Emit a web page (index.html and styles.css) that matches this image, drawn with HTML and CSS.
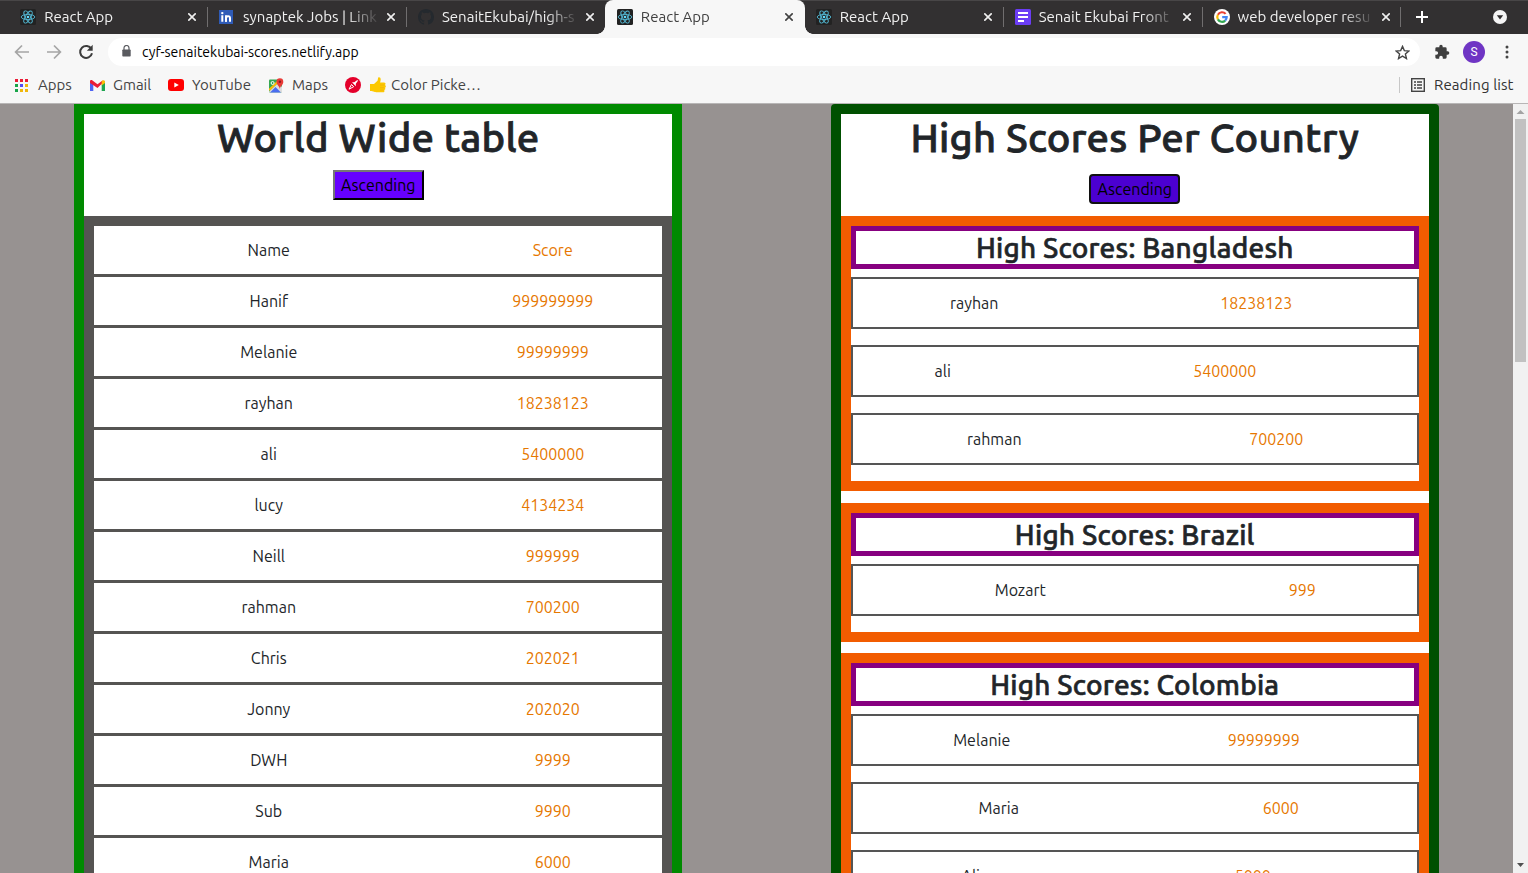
FILE: index.html
```html
<!DOCTYPE html>
<html lang="en">
<head>
<meta charset="utf-8">
<title>React App</title>
<link rel="stylesheet" href="styles.css">
</head>
<body>
<svg class="defs" width="0" height="0">
  <symbol id="react" viewBox="0 0 16 16"><rect width="16" height="16" rx="1.5" fill="#222"/><g fill="none" stroke="#53b8d4" stroke-width=".9"><ellipse cx="8" cy="8" rx="6.8" ry="2.6"/><ellipse cx="8" cy="8" rx="6.8" ry="2.6" transform="rotate(60 8 8)"/><ellipse cx="8" cy="8" rx="6.8" ry="2.6" transform="rotate(120 8 8)"/></g><circle cx="8" cy="8" r="1.3" fill="#61dafb"/></symbol>
  <symbol id="close" viewBox="0 0 8 8"><path d="M.3.3l7.4 7.4M7.700.3L.3 7.700" stroke="currentColor" stroke-width="1.6"/></symbol>
</svg>
<header class="browser">
  <div class="tabs">
    <div class="tab"><svg class="fav"><use href="#react"/></svg><span class="title">React App</span><svg class="close"><use href="#close"/></svg></div>
    <div class="tab"><svg class="fav" viewBox="0 0 16 16"><rect y="1" width="14" height="14" fill="#2f5bb7"/><path d="M2.3 6.2h2v6.5h-2zM6 6.2h1.9v6.5H6z" fill="#fff"/><circle cx="3.3" cy="4.1" r="1.2" fill="#fff"/><path d="M7 12.7V9c0-2.3 4-2.600 4 0v3.700" fill="none" stroke="#fff" stroke-width="2"/></svg><span class="title">synaptek Jobs | Link</span><svg class="close"><use href="#close"/></svg></div>
    <div class="tab no-line"><svg class="fav" viewBox="0 0 16 16"><path fill="#24292e" d="M8 0C3.580 0 0 3.580 0 8c0 3.540 2.290 6.530 5.470 7.590.4.070.55-.17.55-.38v-1.490c-2.010.37-2.530-.49-2.690-.94-.09-.23-.48-.94-.82-1.130-.28-.15-.68-.52-.01-.53.63-.01 1.080.58 1.230.82.72 1.210 1.870.87 2.330.66.070-.52.28-.87.51-1.070-1.780-.2-3.640-.89-3.640-3.950 0-.87.31-1.590.82-2.150-.08-.2-.36-1.020.08-2.120 0 0 .67-.21 2.200.82a7.600 7.600 0 0 1 4 0c1.530-1.040 2.200-.82 2.200-.82.44 1.100.16 1.920.08 2.120.51.56.82 1.270.82 2.150 0 3.070-1.870 3.750-3.650 3.950.29.25.54.73.54 1.480v2.200c0 .21.150.46.55.38A8 8 0 0 0 16 8c0-4.420-3.580-8-8-8z"/></svg><span class="title">SenaitEkubai/high-s</span><svg class="close"><use href="#close"/></svg></div>
    <div class="tab active"><svg class="fav"><use href="#react"/></svg><span class="title">React App</span><svg class="close"><use href="#close"/></svg></div>
    <div class="tab"><svg class="fav"><use href="#react"/></svg><span class="title">React App</span><svg class="close"><use href="#close"/></svg></div>
    <div class="tab"><svg class="fav" viewBox="0 0 16 16"><rect width="16" height="16" rx="1.500" fill="#6b3df5"/><path d="M3 4h10M3 8h10M3 12h6" stroke="#fff" stroke-width="1.900"/></svg><span class="title">Senait Ekubai Front</span><svg class="close"><use href="#close"/></svg></div>
    <div class="tab"><svg class="fav" viewBox="0 0 16 16"><circle cx="8" cy="8" r="8" fill="#fff"/><g fill="none" stroke-width="2.200"><path d="M11.600 4.900A4.700 4.700 0 0 0 3.900 5.700" stroke="#ea4335"/><path d="M3.900 5.700a4.700 4.700 0 0 0 0 4.700" stroke="#fbbc05"/><path d="M3.900 10.400a4.700 4.700 0 0 0 7.300 1.200" stroke="#34a853"/><path d="M11.200 11.600c1-.9 1.500-2 1.500-3.500H8.200" stroke="#4285f4"/></g></svg><span class="title">web developer resu</span><svg class="close"><use href="#close"/></svg></div>
    <svg class="plus" viewBox="0 0 12 12"><path d="M6 0v12M0 6h12" stroke="#fff" stroke-width="2"/></svg>
    <svg class="tabmenu" viewBox="0 0 14 14"><circle cx="7" cy="7" r="7" fill="#f5f5f5"/><path d="M3.800 5.300h6.400L7 9.500z" fill="#2f2d2e"/></svg>
  </div>
  <div class="toolbar">
    <svg class="nav" viewBox="0 0 16 16"><path d="M15 8H2M8 1.500L1.600 8 8 14.500" fill="none" stroke="#a5a5a5" stroke-width="1.700"/></svg>
    <svg class="nav" viewBox="0 0 16 16"><path d="M1 8h13M8 1.500L14.400 8 8 14.500" fill="none" stroke="#a5a5a5" stroke-width="1.700"/></svg>
    <svg class="nav" viewBox="0 0 16 16"><path d="M13.400 5A6 6 0 1 0 14 9.300" fill="none" stroke="#3c3c3c" stroke-width="2"/><path d="M14.700.8v6H8.800z" fill="#3c3c3c"/></svg>
    <div class="omnibox">
      <svg class="lock" viewBox="0 0 9 12"><rect x=".3" y="4.500" width="8.400" height="7" rx=".8" fill="#5a5b60"/><path d="M2 5V3a2.500 2.500 0 0 1 5 0v2" fill="none" stroke="#5a5b60" stroke-width="1.200"/></svg>
      <span class="url">cyf-senaitekubai-scores.netlify.app</span>
      <svg class="star" viewBox="0 0 14 14"><path d="M7 1.300l1.700 3.900 4.200.4-3.200 2.800 1 4.200L7 10.400l-3.700 2.200 1-4.200L1.100 5.600l4.200-.4z" fill="none" stroke="#454545" stroke-width="1.300"/></svg>
    </div>
    <svg class="puzzle" viewBox="0 0 24 24"><path fill="#3f3f3f" d="M20.500 11H19V7a2 2 0 0 0-2-2h-4V3.500a2.500 2.500 0 0 0-5 0V5H4a2 2 0 0 0-2 2v3.800h1.500a2.700 2.700 0 0 1 0 5.400H2V20a2 2 0 0 0 2 2h3.800v-1.500a2.700 2.700 0 0 1 5.400 0V22H17a2 2 0 0 0 2-2v-4h1.500a2.500 2.500 0 0 0 0-5z"/></svg>
    <span class="avatar">S</span>
    <svg class="dots" viewBox="0 0 4 14"><g fill="#444"><circle cx="2" cy="2" r="1.500"/><circle cx="2" cy="7" r="1.500"/><circle cx="2" cy="12" r="1.500"/></g></svg>
  </div>
  <nav class="bookmarks">
    <svg class="bm-icon apps" viewBox="0 0 13 13"><path d="M0 0h3v3H0zM5 0h3v3H5zM10 0h3v3h-3z" fill="#ea1c36"/><path d="M0 5h3v3H0zM0 10h3v3H0z" fill="#18a549"/><path d="M5 5h3v3H5z" fill="#544bf5"/><path d="M10 5h3v3h-3zM5 10h3v3H5zM10 10h3v3h-3z" fill="#f0b70c"/></svg><span class="bm b-apps">Apps</span>
    <svg class="bm-icon gmail" viewBox="0 0 15 11"><path d="M0 1v10h3.300V4z" fill="#4e63f3"/><path d="M15 1v10h-3.300V4z" fill="#1fa551"/><path d="M0 1.500C0 0 1.500-.3 2.500.5l5 3.800 5-3.800 1 1.600-6 6L0 3z" fill="#ea1c36"/><path d="M11.700 1.100C13-.3 15 0 15 1.800V3l-3.300 2.500z" fill="#fbbc04"/></svg><span class="bm b-gmail">Gmail</span>
    <svg class="bm-icon yt" viewBox="0 0 16 12"><rect width="16" height="12" rx="3" fill="#f00"/><path d="M6.300 3.500v5L10.800 6z" fill="#fff"/></svg><span class="bm b-yt">YouTube</span>
    <svg class="bm-icon maps" viewBox="0 0 15 15"><rect y="1.500" width="13" height="13" rx="1" fill="#34a853"/><path d="M0 13.500L9 5l4 4v5.500H1z" fill="#ddd"/><path d="M1 14.500L6.500 9l5.500 5.500z" fill="#4a6df0"/><path d="M0 12l8.500-8" stroke="#fbbc05" stroke-width="2"/><circle cx="3.600" cy="5" r="1.500" fill="none" stroke="#fff"/><path d="M10.800 11C10.500 8 7.500 7 7.500 3.700a3.400 3.400 0 0 1 6.800 0C14.300 7 11.200 8 10.800 11z" fill="#e83a36"/><circle cx="10.900" cy="3.700" r="1.200" fill="#8c1b20"/></svg><span class="bm b-maps">Maps</span>
    <svg class="bm-icon picker" viewBox="0 0 16 16"><circle cx="8" cy="8" r="8" fill="#e4002b"/><path d="M4 12.200l2.500-4.700 2.200 2.200z" fill="none" stroke="#fff" stroke-width="1"/><path d="M7 5.300h2.300L12.300 3 13 3.700l-2.200 3v2.500z" fill="#fff"/></svg>
    <svg class="bm-icon thumb" viewBox="0 0 16 16"><path d="M0 7h4l3.500-3.200L8.200.5c2.300-.7 3.200 1.400 1.900 4.900H14c2 0 2 2.400.7 2.600 1.700.6 1.400 2.500 0 2.700 1.100.7.800 2.200-.5 2.400.7 1 .1 2.200-1.300 2.200H7c-2.500 0-3-1.300-7-1.300z" fill="#fcc800"/><path d="M10 8h4.500M10 10.700h4.300M10 13.200h3.800" stroke="#eba60d" stroke-width=".5"/></svg><span class="bm b-color">Color Picke…</span>
    <span class="reading"><svg class="list" viewBox="0 0 14 14"><rect x=".7" y=".7" width="12.600" height="12.600" fill="none" stroke="#444" stroke-width="1.400"/><path d="M3 4h2M3 7h2M3 10h2M6 4h5M6 7h5M6 10h5" stroke="#444" stroke-width="1.300"/></svg><span class="bm b-reading">Reading list</span></span>
  </nav>
</header>
<div class="viewport">
  <main class="page">
    <section class="card world">
      <h1 class="h-world">World Wide table</h1>
      <button class="sort">Ascending</button>
      <div class="board">
        <div class="row"><span>Name</span><span>Score</span></div>
        <div class="row"><span>Hanif</span><span>999999999</span></div>
        <div class="row"><span>Melanie</span><span>99999999</span></div>
        <div class="row"><span>rayhan</span><span>18238123</span></div>
        <div class="row"><span>ali</span><span>5400000</span></div>
        <div class="row"><span>lucy</span><span>4134234</span></div>
        <div class="row"><span>Neill</span><span>999999</span></div>
        <div class="row"><span>rahman</span><span>700200</span></div>
        <div class="row"><span>Chris</span><span>202021</span></div>
        <div class="row"><span>Jonny</span><span>202020</span></div>
        <div class="row"><span>DWH</span><span>9999</span></div>
        <div class="row"><span>Sub</span><span>9990</span></div>
        <div class="row"><span>Maria</span><span>6000</span></div>
      </div>
    </section>
    <section class="card countries">
      <h1 class="h-country">High Scores Per Country</h1>
      <button class="sort focused">Ascending</button>
      <div class="country">
        <h2>High Scores: Bangladesh</h2>
        <div class="row" style="--name:243px"><span>rayhan</span><span>18238123</span></div>
        <div class="row" style="--name:180px"><span>ali</span><span>5400000</span></div>
        <div class="row" style="--name:283px"><span>rahman</span><span>700200</span></div>
      </div>
      <div class="country">
        <h2>High Scores: Brazil</h2>
        <div class="row" style="--name:335px"><span>Mozart</span><span>999</span></div>
      </div>
      <div class="country">
        <h2>High Scores: Colombia</h2>
        <div class="row" style="--name:258px"><span>Melanie</span><span>99999999</span></div>
        <div class="row" style="--name:292px"><span>Maria</span><span>6000</span></div>
        <div class="row" style="--name:236px"><span>Ali</span><span>5000</span></div>
      </div>
    </section>
  </main>
  <div class="scrollbar">
    <svg class="arrow" viewBox="0 0 15 15"><path d="M3.500 10h8l-4-4z" fill="#a3a3a3"/></svg>
    <div class="thumb-bar"></div>
    <svg class="arrow down" viewBox="0 0 15 15"><path d="M4 5h7l-3.500 4z" fill="#505050"/></svg>
  </div>
</div>
</body>
</html>
```
FILE: styles.css
```css
* { box-sizing: border-box; }
body { margin: 0; height: 873px; overflow: hidden; display: flex; flex-direction: column; font-family: Ubuntu, "Noto Sans", sans-serif; font-size: 16px; color: #212529; }
svg { display: block; flex: none; }
.defs { position: absolute; }
.browser { flex: none; height: 104px; background: #f7f7f7; border-bottom: 1px solid #b8b6b6; }

.tabs { display: flex; height: 34px; padding-left: 8.200px; background: #323031; box-shadow: inset 0 1px #484647; color: #f0f0f0; }
.tab { position: relative; display: flex; align-items: center; width: 198.900px; flex: none; padding-left: 12px; font-size: 15px; }
.tab::after { content: ""; position: absolute; right: -1px; top: 7px; width: 1px; height: 20px; background: #706e6f; }
.tab.no-line::after { display: none; }
.fav { width: 16px; height: 16px; }
.title { width: 137px; margin-left: 8px; white-space: nowrap; line-height: 22px; -webkit-mask-image: linear-gradient(90deg, #000 104px, transparent 137px); mask-image: linear-gradient(90deg, #000 104px, transparent 137px); }
.close { width: 8px; height: 8px; margin-left: 7px; }
.tab.active { width: 200px; margin-right: -1.100px; background: #f7f7f7; border-radius: 8px 8px 0 0; color: #414141; }
.tab.active::before, .tab.active::after { content: ""; position: absolute; top: auto; bottom: 0; width: 8px; height: 8px; background: radial-gradient(circle at 0 0, transparent 7.500px, #f7f7f7 8px); }
.tab.active::before { left: -8px; }
.tab.active::after { right: -8px; background: radial-gradient(circle at 100% 0, transparent 7.500px, #f7f7f7 8px); }
.plus { width: 12px; height: 12px; margin: 11px 0 0 15.500px; }
.tabmenu { width: 14px; height: 14px; margin: 10px 21px 0 auto; }

.toolbar { display: flex; align-items: center; height: 36px; padding-left: 14px; }
.nav { width: 16px; height: 16px; margin-right: 16px; }
.omnibox { display: flex; align-items: center; width: 1312px; height: 28px; margin-left: -2px; padding: 0 10.500px 0 14px; border-radius: 14px; background: #fff; }
.lock { width: 9px; height: 12px; margin-top: -2px; }
.url { margin-left: 11px; color: #000; font-size: 14px; }
.star { width: 15px; height: 15px; margin-left: auto; }
.puzzle { width: 16px; height: 16px; margin-left: 14px; }
.avatar { width: 22px; height: 22px; margin-left: 13px; border-radius: 50%; background: #6f35c4; color: #fff; font: 12px/22px Roboto, sans-serif; text-align: center; }
.dots { width: 4px; height: 14px; margin-left: 19.500px; }

.bookmarks { display: flex; align-items: center; height: 30px; padding-left: 15px; font-size: 15px; color: #444; white-space: nowrap; }
.bm { flex: none; line-height: 22px; }
.apps { width: 13px; height: 13px; }
.b-apps { width: 52px; margin-left: 10px; }
.gmail { width: 15px; height: 11px; }
.b-gmail { width: 55px; margin-left: 8px; }
.yt { width: 16px; height: 12px; }
.b-yt { width: 77px; margin-left: 8px; }
.maps { width: 15px; height: 15px; }
.b-maps { width: 53px; margin-left: 8px; }
.picker { width: 16px; height: 16px; }
.thumb { width: 16px; height: 16px; margin-left: 9px; }
.b-color { margin-left: 5px; }
.reading { display: flex; align-items: center; height: 16px; width: 129px; margin-left: auto; padding-left: 11px; border-left: 1px solid #c7c7c7; color: #333; }
.list { width: 14px; height: 14px; }
.b-reading { margin-left: 9px; letter-spacing: .1px; }

.viewport { display: flex; height: 769px; overflow: hidden; background: #979291; }
.page { display: flex; justify-content: space-around; align-items: flex-start; width: 1513px; }
.card { width: 608px; height: 900px; border: 10px solid #008a00; background: #fff; text-align: center; }
.countries { border-color: #005000; border-radius: 4px; }
h1 { margin: 0 0 8px; height: 48px; font-size: 40px; font-weight: 500; line-height: 48px; letter-spacing: .25px; -webkit-text-stroke: .8px #212529; white-space: nowrap; }
.sort { display: block; width: 91px; height: 30px; margin: 0 auto 16px; padding: 0; border: 2px outset #767676; border-color: #767676 #212121 #212121 #767676; background: #60f; color: #000; font-family: inherit; font-size: 16px; line-height: 26px; white-space: nowrap; }
.sort.focused { margin: 12px auto; border: 2px solid #101010; border-radius: 4px; background: #4b00d1; }
.board { border: 10px solid #555452; background: #555452; }
.row { display: flex; line-height: 48px; }
.row span:first-child { width: var(--name, 349px); color: #212529; }
.row span:last-child { flex: 1; color: #e67700; }
.board .row { height: 48px; margin-bottom: 3px; background: #fff; }
.country { margin-bottom: 11.600px; border: 10px solid #f25c00; }
h2 { height: 43px; margin: 0 0 8px; border: 5px solid #870080; font-size: 28px; font-weight: 500; line-height: 34px; letter-spacing: .22px; -webkit-text-stroke: .6px #212529; white-space: nowrap; }
.country .row { height: 52px; margin-bottom: 16px; border: 2px solid #555; }

.scrollbar { display: flex; flex-direction: column; width: 15px; background: #f1f1f1; }
.arrow { width: 15px; height: 15px; }
.thumb-bar { width: 11px; height: 243px; margin-left: 2px; background: #c1c1c1; }
.down { margin-top: auto; }
```
